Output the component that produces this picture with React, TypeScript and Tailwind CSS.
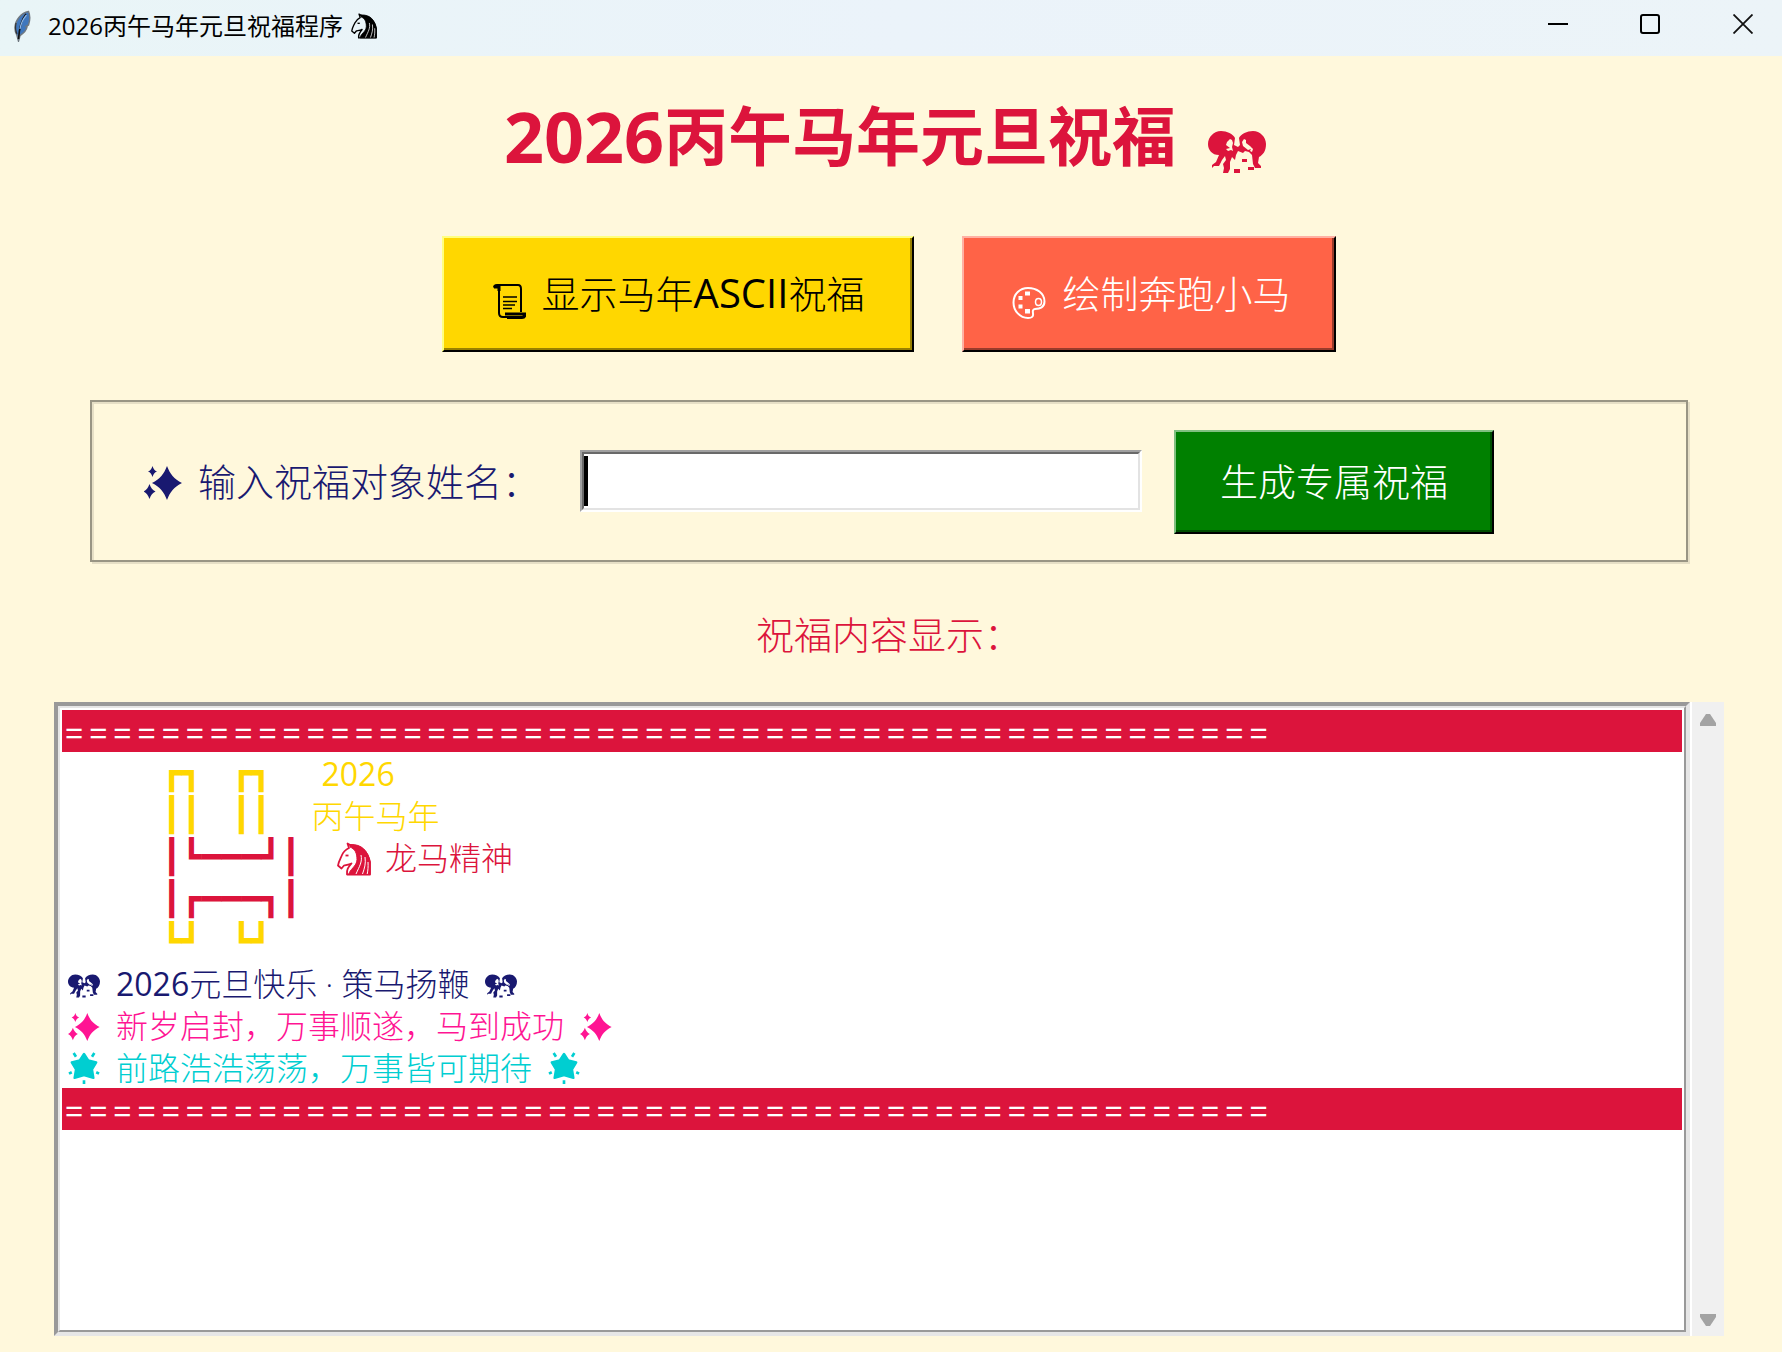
import React from 'react';

type IconProps = { className?: string };

function Feather() {
  return (
    <svg viewBox="0 0 18 32" className="h-8 w-[18px] shrink-0" aria-hidden="true">
      <path d="M15.5 1.5C8 3 2.5 10 2 17c-.2 3 .6 6 2 8.500L5.500 31 7 25.500c4-2.500 6.500-5.500 7-8.500l-1-.5 2.500-1.500C16.800 11 17 5 15.500 1.500Z" fill="#3f77bd" stroke="#6f7880" strokeWidth="1.500" />
      <path d="M13 4C9 9 6.500 15 5.500 29" fill="none" stroke="#111" strokeWidth="1.600" />
      <path d="M13.500 5C10 9 8 13 7 19" fill="none" stroke="#8db8ea" strokeWidth="1.200" />
      <path d="M3 13c-.8 4-.5 8 1 11" fill="none" stroke="#333" strokeWidth="1.200" />
    </svg>
  );
}

function Horse({ className }: IconProps) {
  return (
    <svg viewBox="0 0 34 34" className={className} fill="none" stroke="currentColor" aria-hidden="true">
      <path d="M12 6 10.500 1.500 15 4C24 3.500 31 10 33 20v12.500H10c-.5-5 1-7 4.500-11-2.500 1.500-5.500 1.500-7.500 2L4.500 26.500 1 23.500c.5-4 2.500-7 4-10.500C6.500 9.500 9 7.500 12 6Z" strokeWidth="1.800" strokeLinejoin="round" />
      <path d="M13 2.500C25 2 31 9 33 20v12.500H12c0-5 8-8 8-15C20 11 18 7 13 5Z" fill="currentColor" strokeWidth="1" />
      <path d="M24 13c1.500 7-1.500 11-5 19M28 15c1 7-.5 11-2.500 17M31 20c.3 5 0 8-.8 12" stroke="#fff" strokeWidth="1" />
      <path d="M8.500 13.500h3" strokeWidth="1.800" />
    </svg>
  );
}

function Pair({ className }: IconProps) {
  return (
    <svg viewBox="0 0 58 42" className={className} fill="currentColor" aria-hidden="true">
      <path
        fillRule="evenodd"
        d="M13 0C19 0 25 3 27 7l-1 7 4 2 2-2-1-7C33 3 39 0 45 0c7 0 13 6 13 13 0 7-3 11-7 13l-1 6 3 3v2h-6l-2-4-1-9-3-3-4-1-2 2-5-2-2 4-1 5-3-3-2 5v7l-2 4h-5l1-5-1-4 3-4-1-4-3 4-3 6H6l-2 2v-3l4-3 3-7C4 24 0 19 0 13 0 6 6 0 13 0Zm9 8-3 3-1 3 4 3-4 1 2 2 3-1 2 1-1-4 1-4-1-3Zm14 0-2 3 1 4 5 4 3-1-1 2 2 1 1-3-3-3-4-3v-3Z"
      />
      <path d="M34 28h5v3h-5zM26 38h6v4h-6zM40 36h6v3h-6z" />
    </svg>
  );
}

function Sparkles({ className }: IconProps) {
  return (
    <svg viewBox="0 0 38 34" className={className} fill="currentColor" aria-hidden="true">
      <path d="M23 0c3 8 7 13 15 17-8 4-12 9-15 17-3-8-7-13-15-17 8-4 12-9 15-17Z" />
      <path d="M8.500 0c1 3 2 4.500 4.500 5.500C10.500 6.500 9.500 8 8.500 11 7.500 8 6.500 6.500 4 5.500 6.500 4.500 7.500 3 8.500 0ZM5.500 18c1.500 4 3 6 6 7.500-3 1.500-4.500 3.500-6 7.500-1.500-4-3-6-6-7.500 3-1.500 4.500-3.500 6-7.500Z" />
    </svg>
  );
}

function GlowStar({ className }: IconProps) {
  return (
    <svg viewBox="0 0 32 34" className={className} fill="currentColor" aria-hidden="true">
      <path d="M16 2l4.500 7 8.500 2-4.500 7.500 1.500 9-10-3-10 3 1.500-9L3 11l8.500-2Z" stroke="currentColor" strokeWidth="2.500" strokeLinejoin="round" />
      <path d="m5 1 2.500 4M27 1l-2.500 4M0 23l3-1.500M32 23l-3-1.500M16 34v-4" stroke="currentColor" strokeWidth="2.800" />
    </svg>
  );
}

function Scroll() {
  return (
    <svg viewBox="0 0 34 36" className="mt-4 h-9 w-[34px] shrink-0" fill="none" stroke="currentColor" aria-hidden="true">
      <path d="M2 4.500C2 2.500 3.500 2 5 2h21c2 0 3 1.500 3 4v23" strokeWidth="2" />
      <path d="M2 4h5v4" strokeWidth="3" />
      <path d="M7 4v26c0 2.500 1.500 4 4 4h16" strokeWidth="2" />
      <path d="M13 31h20c0 2-1 3.500-3 3.500H15" strokeWidth="3" />
      <path d="M11 14h14M11 18.500h14M11 22h12M11 25.500h9" strokeWidth="1.600" />
    </svg>
  );
}

function Palette() {
  return (
    <svg viewBox="0 0 34 34" className="mt-5 h-[34px] w-[34px] shrink-0" fill="none" stroke="currentColor" aria-hidden="true">
      <path d="M16 2C8 2 1.500 8 1.500 16.500S8 32 16 32c4 0 5.500-1.500 5-4.500-.3-2.500-.5-4 2-4.500 5-.5 9.500-1.500 9.500-7.500C32.500 7 24.500 2 16 2Z" strokeWidth="2" />
      <ellipse cx="26.500" cy="16" rx="3" ry="3.500" strokeWidth="1.500" />
      <path d="M13 5.500h5v4h-5zM6.500 10h4v4h-4zM6.500 18.500h4v4h-4zM13 23h5v4.500h-5z" fill="currentColor" stroke="none" />
    </svg>
  );
}

const raised = 'border-2 border-r-black border-b-black';

function Separator() {
  return (
    <div className="flex h-[42px] items-center bg-[#dc143c] font-['Inter'] text-[37px] font-light leading-[42px] text-white">
      {'='.repeat(50)}
    </div>
  );
}

function Row({ color, children }: { color: string; children?: React.ReactNode }) {
  return <div className={`flex h-[42px] items-center whitespace-pre ${color}`}>{children}</div>;
}

const boxText = "font-['DejaVu_Sans_Mono'] text-[33px] font-normal leading-[42px]";

export default function App() {
  return (
    <div className="flex min-h-screen flex-col bg-[#fff8dc] font-['Open_Sans','Noto_Sans_CJK_SC',sans-serif] font-light">
      <header className="flex h-14 shrink-0 items-center bg-linear-to-r from-[#e9f5f7] via-[#ebf3fa] to-[#ecf4f8] pb-1 pl-[13px] text-black">
        <Feather />
        <span className="ml-[17px] text-[24px] font-normal leading-8">2026丙午马年元旦祝福程序</span>
        <Horse className="ml-2 h-[26px] w-[26px]" />
        <div className="ml-auto flex h-full pb-1">
          <button aria-label="最小化" className="flex w-[92px] items-center justify-center">
            <svg viewBox="0 0 20 20" className="h-5 w-5"><path d="M0 10h20" stroke="#000" strokeWidth="2" /></svg>
          </button>
          <button aria-label="最大化" className="flex w-[92px] items-center justify-center">
            <svg viewBox="0 0 20 20" className="h-5 w-5"><rect x="1" y="1" width="18" height="18" rx="2" fill="none" stroke="#000" strokeWidth="2" /></svg>
          </button>
          <button aria-label="关闭" className="flex w-[86px] items-center justify-center pl-2">
            <svg viewBox="0 0 20 20" className="h-5 w-5"><path d="M.5.5l19 19M19.500.5l-19 19" stroke="#111" strokeWidth="1.800" /></svg>
          </button>
        </div>
      </header>

      <main className="flex flex-1 flex-col pr-[58px] pb-4 pl-[54px]">
        <h1 className="mt-8 flex h-24 items-center justify-center pr-2 text-[64px] font-bold leading-[96px] text-[#dc143c]">
          <span className="text-[70px]">2026</span>丙午马年元旦祝福
          <Pair className="ml-8 mt-8 h-[42px] w-[58px]" />
        </h1>

        <div className="mt-[52px] flex justify-center gap-12 text-[38px]">
          <button className={`${raised} h-[116px] border-t-[#ffff80] border-l-[#ffff80] bg-[#ffd700] text-black`}>
            <span className="flex h-full items-center border-r-2 border-b-2 border-[#998100] pl-12 pr-[46px]">
              <Scroll />
              <span className="ml-4 leading-[56px]">显示马年<span className="text-[40px] font-normal">ASCII</span>祝福</span>
            </span>
          </button>
          <button className={`${raised} h-[116px] border-t-[#ffb1a3] border-l-[#ffb1a3] bg-[#ff6347] text-white`}>
            <span className="flex h-full items-center border-r-2 border-b-2 border-[#993b2b] pl-12 pr-[42px]">
              <Palette />
              <span className="ml-4 leading-[56px]">绘制奔跑小马</span>
            </span>
          </button>
        </div>

        <form
          onSubmit={(e) => e.preventDefault()}
          className="mx-9 mt-12 flex h-[162px] items-center border-2 border-[#999584] pl-[52px] text-[38px] shadow-[inset_2px_2px_0_#e6dfc6,2px_2px_0_#e6dfc6]"
        >
          <label htmlFor="name" className="flex items-center leading-[56px] text-[#191970]">
            <Sparkles className="mr-4 mt-1 h-[34px] w-[38px]" />
            输入祝福对象姓名：
          </label>
          <div className="relative ml-10">
            <div className="border-2 border-t-[#a0a0a0] border-r-white border-b-white border-l-[#a0a0a0]">
              <input
                id="name"
                type="text"
                className="block h-[58px] w-[558px] rounded-none border-2 border-t-[#696969] border-r-[#e3e3e3] border-b-[#e3e3e3] border-l-[#696969] bg-white px-1 outline-none"
              />
            </div>
            <span className="absolute top-1.5 bottom-1.5 left-1 w-1 bg-black" />
          </div>
          <button className={`${raised} mt-0.5 ml-8 h-[104px] border-t-[#80c080] border-l-[#80c080] bg-[#008000] text-white`}>
            <span className="flex h-full items-center border-r-2 border-b-2 border-[#004d00] pr-[42px] pl-11 leading-[56px]">生成专属祝福</span>
          </button>
        </form>

        <h2 className="mt-11 text-center text-[38px] leading-[56px] text-[#dc143c]">祝福内容显示：</h2>

        <div className="mt-10 flex flex-1">
          <div className="flex-1 border-t-4 border-r-4 border-b-4 border-l-4 border-t-[#999] border-r-[#e6e6e6] border-b-[#e6e6e6] border-l-[#999]">
            <div className="h-full border-2 border-t-[#e6e6e6] border-r-[#999] border-b-[#999] border-l-[#e6e6e6] bg-white p-0.5 text-[32px] leading-[42px]">
              <Separator />
              <Row color="text-[#ffd700]">
                <span className={`${boxText} pl-[100px]`}>┏┓</span>
                <span className={`${boxText} pl-[30px]`}>┏┓</span>
                <span className="pl-[50px] pt-0.5 font-normal">2026</span>
              </Row>
              <Row color="text-[#ffd700]">
                <span className={`${boxText} pl-[100px]`}>┃┃</span>
                <span className={`${boxText} pl-[30px]`}>┃┃</span>
                <span className="pl-10 pt-0.5">丙午马年</span>
              </Row>
              <Row color="text-[#dc143c]">
                <span className={`${boxText} pl-[100px]`}>┃┗━━━┛┃</span>
                <Horse className="ml-9 mt-1 h-[34px] w-[34px]" />
                <span className="pl-3.5 pt-0.5">龙马精神</span>
              </Row>
              <Row color="text-[#dc143c]">
                <span className={`${boxText} pl-[100px]`}>┃┏━━━┓┃</span>
              </Row>
              <Row color="text-[#ffd700]">
                <span className={`${boxText} pl-[100px]`}>┗┛</span>
                <span className={`${boxText} pl-[30px]`}>┗┛</span>
              </Row>
              <Row color="gap-4 pl-1.5 pt-0.5 text-[#191970]">
                <Pair className="mt-1 h-6 w-8" />
                <span><span className="font-normal">2026</span>元旦快乐 · 策马扬鞭</span>
                <Pair className="mt-1 h-6 w-8" />
              </Row>
              <Row color="gap-4 pl-1.5 pt-0.5 text-[#ff1493]">
                <Sparkles className="mt-0.5 h-7 w-8" />
                <span>新岁启封，万事顺遂，马到成功</span>
                <Sparkles className="mt-0.5 h-7 w-8" />
              </Row>
              <Row color="gap-4 pl-1.5 pt-0.5 text-[#00ced1]">
                <GlowStar className="h-8 w-8" />
                <span>前路浩浩荡荡，万事皆可期待</span>
                <GlowStar className="h-8 w-8" />
              </Row>
              <Separator />
            </div>
          </div>
          <div className="flex w-[34px] flex-col items-center justify-between border-l-2 border-white bg-[#f0f0f0] pt-3 pb-2.5">
            <svg viewBox="0 0 16 12" className="h-3 w-4" fill="#a3a3a3"><path d="M6 0h4l6 9v3H0V9Z" /></svg>
            <svg viewBox="0 0 16 12" className="h-3 w-4" fill="#a3a3a3"><path d="M6 12h4l6-9V0H0v3Z" /></svg>
          </div>
        </div>
      </main>
    </div>
  );
}
